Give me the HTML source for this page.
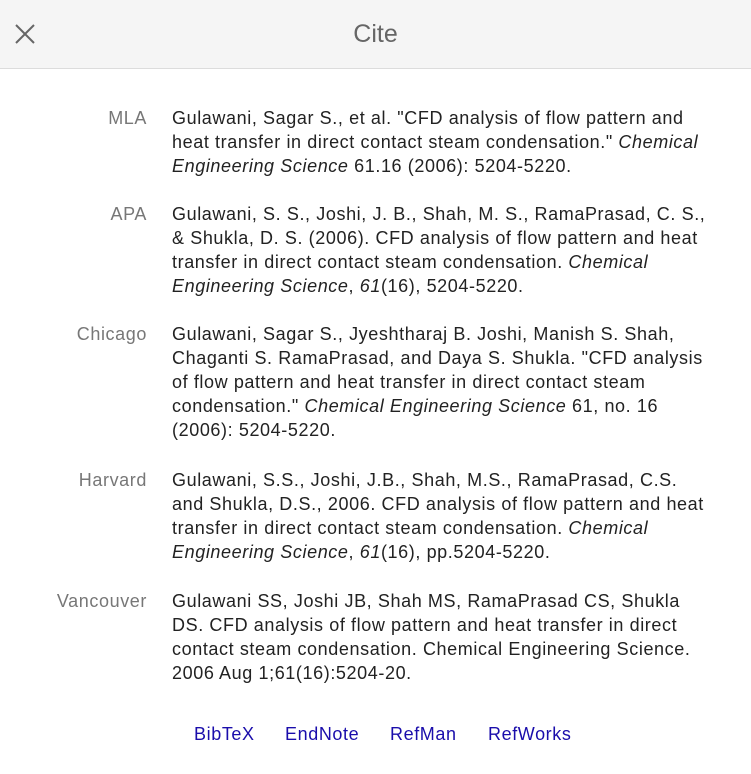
<!DOCTYPE html>
<html><head><style>
body{margin:0;width:751px;height:774px;background:#fff;font-family:"Liberation Sans",Arial,sans-serif;position:relative;overflow:hidden}
.hd{position:absolute;left:0;top:0;width:751px;height:68px;background:#f5f5f5;border-bottom:1px solid #dcdcdc}
.t{position:absolute;left:0;width:751px;top:20px;text-align:center;font-size:25px;color:#666}
.e{position:absolute;left:0;width:751px;font-size:18px;line-height:24px;color:#222;white-space:nowrap;letter-spacing:0.6px}
.l{position:absolute;right:604px;color:#777;text-align:right}
.c{position:absolute;left:172px}
i{font-style:italic}
.lk{position:absolute;top:724px;font-size:18px;color:#1a0dab;letter-spacing:0.6px}
</style></head><body>
<div class="hd"><svg style="position:absolute;left:14px;top:23px" width="22" height="22" viewBox="0 0 22 22"><path d="M2 2L20 20M20 2L2 20" stroke="#666" stroke-width="2"/></svg><div class="t">Cite</div></div>
<div class="e" style="top:106px"><span class="l">MLA</span><span class="c">Gulawani, Sagar S., et al. "CFD analysis of flow pattern and<br>heat transfer in direct contact steam condensation." <i>Chemical<br>Engineering Science</i> 61.16 (2006): 5204-5220.</span></div>
<div class="e" style="top:202px"><span class="l">APA</span><span class="c">Gulawani, S. S., Joshi, J. B., Shah, M. S., RamaPrasad, C. S.,<br>&amp; Shukla, D. S. (2006). CFD analysis of flow pattern and heat<br>transfer in direct contact steam condensation. <i>Chemical<br>Engineering Science</i>, <i>61</i>(16), 5204-5220.</span></div>
<div class="e" style="top:322px"><span class="l">Chicago</span><span class="c">Gulawani, Sagar S., Jyeshtharaj B. Joshi, Manish S. Shah,<br>Chaganti S. RamaPrasad, and Daya S. Shukla. "CFD analysis<br>of flow pattern and heat transfer in direct contact steam<br>condensation." <i>Chemical Engineering Science</i> 61, no. 16<br>(2006): 5204-5220.</span></div>
<div class="e" style="top:468px"><span class="l">Harvard</span><span class="c">Gulawani, S.S., Joshi, J.B., Shah, M.S., RamaPrasad, C.S.<br>and Shukla, D.S., 2006. CFD analysis of flow pattern and heat<br>transfer in direct contact steam condensation. <i>Chemical<br>Engineering Science</i>, <i>61</i>(16), pp.5204-5220.</span></div>
<div class="e" style="top:589px"><span class="l">Vancouver</span><span class="c">Gulawani SS, Joshi JB, Shah MS, RamaPrasad CS, Shukla<br>DS. CFD analysis of flow pattern and heat transfer in direct<br>contact steam condensation. Chemical Engineering Science.<br>2006 Aug 1;61(16):5204-20.</span></div>
<span class="lk" style="left:194px">BibTeX</span>
<span class="lk" style="left:285px">EndNote</span>
<span class="lk" style="left:390px">RefMan</span>
<span class="lk" style="left:488px">RefWorks</span>
</body></html>
